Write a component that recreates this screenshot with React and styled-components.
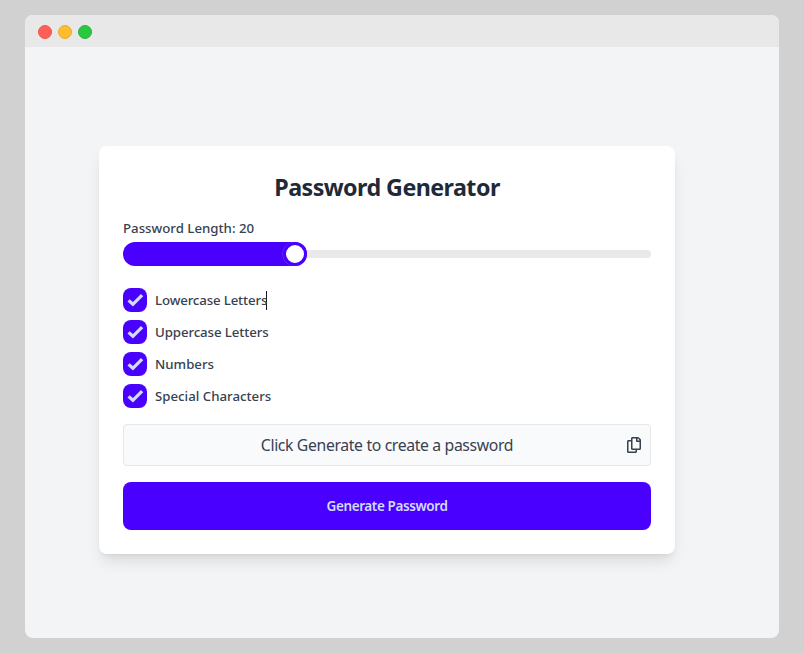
import React, { useState } from "react";
import styled, { createGlobalStyle } from "styled-components";
import { FaRegCopy } from "react-icons/fa";

const GlobalStyle = createGlobalStyle`
  *, *::before, *::after { box-sizing: border-box; }
  body {
    margin: 0;
    background: #d1d1d1;
    font-family: "Segoe UI", "Noto Sans", "Open Sans", sans-serif;
    color: #1f2937;
  }
`;

const Desktop = styled.div`
  height: 100vh;
  padding: 15px 25px;
  background: #d1d1d1;
`;

const Window = styled.div`
  display: flex;
  flex-direction: column;
  height: 623px;
  border-radius: 8px;
  overflow: hidden;
  background: #f3f4f6;
`;

const TitleBar = styled.header`
  display: flex;
  align-items: center;
  gap: 6px;
  height: 32px;
  padding: 2px 13px 0;
  flex: none;
  background: #e8e8e8;
`;

const Light = styled.span`
  width: 14px;
  height: 14px;
  border-radius: 50%;
  background: ${(p) => p.$fill};
  border: 1px solid ${(p) => p.$edge};
`;

const Body = styled.main`
  flex: 1;
  padding: 99px 0 0 74px;
`;

const Card = styled.section`
  display: flex;
  flex-direction: column;
  width: 576px;
  height: 408px;
  padding: 24px;
  border-radius: 8px;
  background: #fff;
  box-shadow: 0 10px 15px -3px rgba(0, 0, 0, 0.1), 0 4px 6px -4px rgba(0, 0, 0, 0.1);
`;

const Title = styled.h1`
  height: 32px;
  margin: 0 0 16px;
  padding-top: 1px;
  font-size: 23.25px;
  line-height: 32px;
  font-weight: 700;
  letter-spacing: -0.55px;
  text-align: center;
  white-space: nowrap;
`;

const Label = styled.span`
  height: 20px;
  font-size: 13.25px;
  line-height: 20px;
  font-weight: 500;
  letter-spacing: ${(p) => p.$tracking};
  color: #374151;
  white-space: nowrap;
`;

const Slider = styled.div`
  display: flex;
  align-items: center;
  height: 24px;
  margin: 4px 0 22px;
`;

const Fill = styled.div`
  display: flex;
  justify-content: flex-end;
  width: 184px;
  height: 24px;
  border-radius: 12px;
  background: #4a00ff;
`;

const Thumb = styled.span`
  width: 24px;
  height: 24px;
  border: 3px solid #4a00ff;
  border-radius: 50%;
  background: #fff;
  box-shadow: -0.5px 0 0 rgba(255, 255, 255, 0.25);
`;

const Track = styled.div`
  flex: 1;
  height: 8px;
  border-radius: 0 4px 4px 0;
  background: #e9e9ea;
`;

const Options = styled.div`
  display: flex;
  flex-direction: column;
  gap: 8px;
  margin-bottom: 16px;
`;

const Option = styled.label`
  display: flex;
  align-items: center;
  gap: 8px;
  height: 24px;
`;

const LabelGroup = styled.span`
  display: flex;
  align-items: center;
  width: ${(p) => (p.$editing ? "112px" : "auto")};
  border-right: ${(p) => (p.$editing ? "1px solid #111827" : "0")};
  height: ${(p) => (p.$editing ? "19px" : "20px")};
`;

const CheckBox = styled.span`
  display: flex;
  align-items: center;
  justify-content: center;
  width: 24px;
  height: 24px;
  border-radius: 8px;
  background: #4a00ff;
`;

const Output = styled.div`
  display: flex;
  align-items: center;
  height: 42px;
  margin-bottom: 16px;
  padding: 0 8px 0 9px;
  border: 1px solid #e5e7eb;
  border-radius: 4px;
  background: #f9fafb;
  color: #374151;
`;

const OutputText = styled.span`
  flex: 1;
  padding-left: 15px;
  font-size: 15.75px;
  line-height: 24px;
  letter-spacing: -0.35px;
  text-align: center;
  white-space: nowrap;
`;

const GenerateButton = styled.button`
  height: 48px;
  padding: 0;
  border: 0;
  border-radius: 8px;
  background: #4a00ff;
  color: #d1dbff;
  font-family: inherit;
  font-size: 13.5px;
  font-weight: 600;
  line-height: 14px;
  letter-spacing: -0.4px;
`;

const options = [
  { label: "Lowercase Letters", tracking: "-0.14px", editing: true },
  { label: "Uppercase Letters", tracking: "-0.1px" },
  { label: "Numbers", tracking: "0px" },
  { label: "Special Characters", tracking: "0px" },
];

function CheckMark() {
  return (
    <svg width="24" height="24" viewBox="0 0 24 24" fill="none">
      <path d="M5.6 12.4 9.9 16.3 19.1 7.2" stroke="#d1dbff" strokeWidth="3.3" />
    </svg>
  );
}

export default function App() {
  const [length] = useState(20);
  return (
    <Desktop>
      <GlobalStyle />
      <Window>
        <TitleBar>
          <Light $fill="#ff5f57" $edge="#f0544d" />
          <Light $fill="#febc2e" $edge="#e9ab33" />
          <Light $fill="#28c840" $edge="#24b33a" />
        </TitleBar>
        <Body>
          <Card>
            <Title>Password Generator</Title>
            <Label $tracking="0px">Password Length: {length}</Label>
            <Slider>
              <Fill><Thumb /></Fill>
              <Track />
            </Slider>
            <Options>
              {options.map((o) => (
                <Option key={o.label}>
                  <CheckBox><CheckMark /></CheckBox>
                  <LabelGroup $editing={o.editing}>
                    <Label $tracking={o.tracking}>{o.label}</Label>
                  </LabelGroup>
                </Option>
              ))}
            </Options>
            <Output>
              <OutputText>Click Generate to create a password</OutputText>
              <FaRegCopy size={16} />
            </Output>
            <GenerateButton>Generate Password</GenerateButton>
          </Card>
        </Body>
      </Window>
    </Desktop>
  );
}
